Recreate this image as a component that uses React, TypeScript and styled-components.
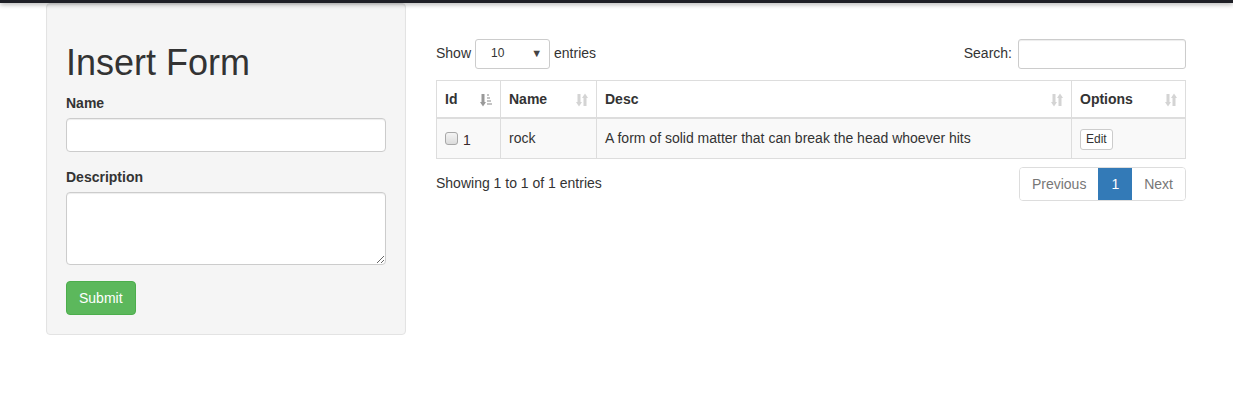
import React from "react";
import styled, { createGlobalStyle } from "styled-components";

const GlobalStyle = createGlobalStyle`
  * { box-sizing: border-box; }
  body {
    margin: 0;
    font-family: "Liberation Sans", Arial, sans-serif;
    font-size: 14px;
    line-height: 1.42857;
    color: #333;
    background: #fff;
  }
`;

type Row = { id: number; name: string; desc: string };

const rows: Row[] = [
  { id: 1, name: "rock", desc: "A form of solid matter that can break the head whoever hits" },
];

function SortBoth() {
  return (
    <svg width="12" height="14" viewBox="0 0 12 14">
      <g fill="#d4d4d4">
        <rect x="1.5" y="1" width="3" height="9" />
        <polygon points="0,9 6,9 3,13.5" />
        <rect x="7.5" y="4" width="3" height="9" />
        <polygon points="6,5 12,5 9,0.5" />
      </g>
    </svg>
  );
}

function SortAsc() {
  return (
    <svg width="12" height="14" viewBox="0 0 12 14">
      <g fill="#999">
        <rect x="1.5" y="1" width="3" height="9" />
        <polygon points="0,9 6,9 3,13.5" />
      </g>
      <g fill="#c4c4c4">
        <rect x="7" y="1" width="2" height="2" />
        <rect x="7" y="4" width="3" height="2" />
        <rect x="7" y="7" width="4" height="2" />
        <rect x="7" y="10" width="5" height="2" />
      </g>
    </svg>
  );
}

function App() {
  return (
    <>
      <GlobalStyle />
      <TopBar />
      <Container>
        <FormCol>
          <Well>
            <Heading>Insert Form</Heading>
            <FormGroup>
              <Label>Name</Label>
              <Input type="text" />
            </FormGroup>
            <FormGroup>
              <Label>Description</Label>
              <TextArea rows={3} />
            </FormGroup>
            <SubmitButton>Submit</SubmitButton>
          </Well>
        </FormCol>
        <TableCol>
          <Toolbar>
            <Inline>
              Show
              <SelectBox>
                <span>10</span>
                <Caret>▼</Caret>
              </SelectBox>
              entries
            </Inline>
            <Inline>
              Search:
              <SearchInput type="search" />
            </Inline>
          </Toolbar>
          <Table>
            <colgroup>
              <col style={{ width: 64 }} />
              <col style={{ width: 96 }} />
              <col style={{ width: 475 }} />
              <col style={{ width: 114 }} />
            </colgroup>
            <thead>
              <tr>
                <Th>
                  Id
                  <SortIcon><SortAsc /></SortIcon>
                </Th>
                <Th>
                  Name
                  <SortIcon><SortBoth /></SortIcon>
                </Th>
                <Th>
                  Desc
                  <SortIcon><SortBoth /></SortIcon>
                </Th>
                <Th>
                  Options
                  <SortIcon><SortBoth /></SortIcon>
                </Th>
              </tr>
            </thead>
            <tbody>
              {rows.map((r) => (
                <tr key={r.id}>
                  <Td>
                    <IdCell>
                      <CheckBox type="checkbox" />
                      <IdText>{r.id}</IdText>
                    </IdCell>
                  </Td>
                  <Td>{r.name}</Td>
                  <Td>{r.desc}</Td>
                  <Td>
                    <EditButton>Edit</EditButton>
                  </Td>
                </tr>
              ))}
            </tbody>
          </Table>
          <Footer>
            <Info>Showing 1 to 1 of 1 entries</Info>
            <Pagination>
              <PageItem>Previous</PageItem>
              <PageItem active>1</PageItem>
              <PageItem>Next</PageItem>
            </Pagination>
          </Footer>
        </TableCol>
      </Container>
    </>
  );
}

export default App;

const TopBar = styled.div`
  position: relative;
  z-index: 2;
  height: 3px;
  background: #1e1f26;
  box-shadow: 0 1px 5px rgba(0, 0, 0, 0.45);
`;

const Container = styled.div`
  width: 1170px;
  margin: 0 0 0 31px;
  display: flex;
`;

const FormCol = styled.div`
  width: 390px;
  padding: 0 15px;
`;

const TableCol = styled.div`
  width: 780px;
  padding: 36px 15px 0;
`;

const Well = styled.div`
  background: #f5f5f5;
  border: 1px solid #e3e3e3;
  border-radius: 4px;
  padding: 19px;
  box-shadow: inset 0 1px 1px rgba(0, 0, 0, 0.05);
`;

const Heading = styled.h1`
  font-size: 36px;
  font-weight: 500;
  line-height: 1.1;
  margin: 20px 0 11px;
`;

const FormGroup = styled.div`
  margin-bottom: 16px;
`;

const Label = styled.label`
  display: block;
  font-weight: bold;
  margin-bottom: 4px;
`;

const Input = styled.input`
  display: block;
  width: 100%;
  height: 34px;
  padding: 6px 12px;
  font: inherit;
  border: 1px solid #ccc;
  border-radius: 4px;
  background: #fff;
  box-shadow: inset 0 1px 1px rgba(0, 0, 0, 0.075);
`;

const TextArea = styled.textarea`
  display: block;
  width: 100%;
  height: 73px;
  padding: 6px 12px;
  font: inherit;
  border: 1px solid #ccc;
  border-radius: 4px;
  background: #fff;
  box-shadow: inset 0 1px 1px rgba(0, 0, 0, 0.075);
`;

const SubmitButton = styled.button`
  height: 34px;
  padding: 7px 12px 5px;
  font: inherit;
  color: #fff;
  background: #5cb85c;
  border: 1px solid #4cae4c;
  border-radius: 4px;
`;

const Toolbar = styled.div`
  display: flex;
  justify-content: space-between;
  align-items: center;
  margin-bottom: 11px;
`;

const Inline = styled.label`
  display: flex;
  align-items: center;
  gap: 4px;
`;

const SelectBox = styled.div`
  width: 75px;
  height: 30px;
  display: flex;
  align-items: center;
  justify-content: space-between;
  padding: 0 7px 0 15px;
  font-size: 12px;
  border: 1px solid #ccc;
  border-radius: 3px;
  background: #fff;
  color: #333;
`;

const Caret = styled.span`
  font-size: 11px;
  color: #444;
`;

const SearchInput = styled.input`
  width: 168px;
  height: 30px;
  margin-left: 2px;
  border: 1px solid #ccc;
  border-radius: 3px;
  box-shadow: inset 0 1px 1px rgba(0, 0, 0, 0.075);
`;

const Table = styled.table`
  width: 100%;
  table-layout: fixed;
  border-collapse: collapse;
  border: 1px solid #ddd;
`;

const Th = styled.th`
  position: relative;
  text-align: left;
  font-weight: bold;
  padding: 8px 30px 8px 8px;
  line-height: 20px;
  border: 1px solid #ddd;
  border-bottom: 2px solid #ddd;
`;

const SortIcon = styled.span`
  position: absolute;
  right: 8px;
  top: 12px;
  display: flex;
`;

const Td = styled.td`
  padding: 9px 8px 8px;
  line-height: 20px;
  border: 1px solid #ddd;
  background: #f9f9f9;
  vertical-align: top;
`;

const IdCell = styled.div`
  display: flex;
  align-items: center;
  gap: 5px;
`;

const CheckBox = styled.input`
  appearance: none;
  width: 13px;
  height: 13px;
  margin: 0;
  border: 1px solid #a8a8a8;
  border-radius: 3px;
  background: linear-gradient(#f4f4f4, #dcdcdc);
`;

const IdText = styled.span`
  position: relative;
  top: 2px;
  color: #3a2a2a;
`;

const EditButton = styled.button`
  height: 21px;
  padding: 0 5px;
  font: 12px "Liberation Sans", Arial, sans-serif;
  color: #333;
  background: #fff;
  border: 1px solid #ccc;
  border-radius: 3px;
`;

const Footer = styled.div`
  display: flex;
  justify-content: space-between;
  align-items: flex-start;
  margin-top: 8px;
`;

const Info = styled.div`
  padding-top: 7px;
`;

const Pagination = styled.div`
  display: flex;
  border: 1px solid #ddd;
  border-radius: 4px;
  overflow: hidden;
`;

const PageItem = styled.span<{ active?: boolean }>`
  padding: 6px 12px;
  line-height: 20px;
  color: ${(p) => (p.active ? "#fff" : "#777")};
  background: ${(p) => (p.active ? "#337ab7" : "#fff")};
  & + & {
    border-left: 1px solid ${(p) => (p.active ? "#337ab7" : "#ddd")};
  }
`;
